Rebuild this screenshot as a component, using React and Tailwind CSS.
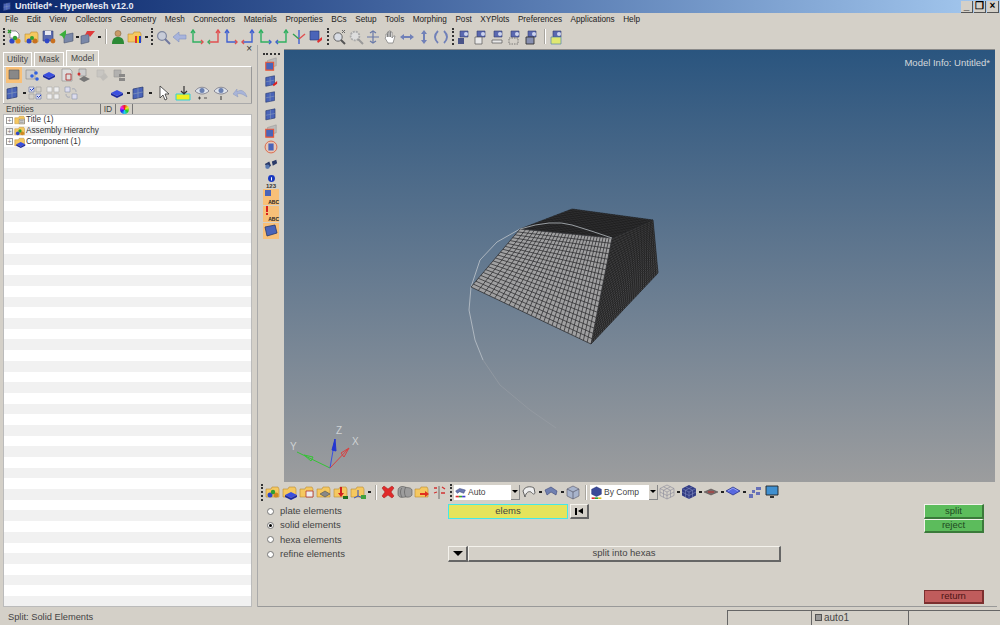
import React from 'react';

const UI = '"Liberation Sans", Arial, sans-serif';

// builds the element grid for a four cornered face, bias squeezes the cells towards one side
function quadGrid(a, b, c, d, nu, nv, bias = 1) {
    const lerp = (p, q, t) => [p[0] + (q[0] - p[0]) * t, p[1] + (q[1] - p[1]) * t];
    const fmt = (p) => `${p[0].toFixed(1)} ${p[1].toFixed(1)}`;
    let out = '';
    for (let i = 0; i <= nu; i++) {
        const t = i / nu;
        out += `M${fmt(lerp(a, b, t))}L${fmt(lerp(d, c, t))}`;
    }
    for (let j = 0; j <= nv; j++) {
        const t = Math.pow(j / nv, bias);
        out += `M${fmt(lerp(a, d, t))}L${fmt(lerp(b, c, t))}`;
    }
    return out;
}

const P = {
    fl: [471, 287], tl: [520, 229], tr: [612, 238], bt: [591, 344],
    rb: [658, 273], rt: [653, 220], bk: [572, 209],
};
const poly = (...pts) => pts.map((p) => p.join(',')).join(' ');

function Model() {
    return (
        <svg className="absolute inset-0" width="711" height="432" viewBox="284 50 711 432">
            <polyline points="520,229 497,242 480,260 471,287 469,310 475,340 483,360" fill="none" stroke="#b4bcc4" strokeWidth="0.9" />
            <polyline points="483,360 500,385 530,410 556,428" fill="none" stroke="#9aa0a6" strokeWidth="0.6" />
            <polygon points={poly(P.tl, P.bk, P.rt, P.tr)} fill="#3c3c3e" />
            <path d={quadGrid(P.tl, P.bk, P.rt, P.tr, 14, 32)} stroke="#151515" strokeWidth="0.5" fill="none" />
            <polygon points={poly(P.tr, P.rt, P.rb, P.bt)} fill="#505052" />
            <path d={quadGrid(P.tr, P.rt, P.rb, P.bt, 30, 34)} stroke="#1b1b1b" strokeWidth="0.65" fill="none" />
            <polygon points={poly(P.fl, P.tl, P.tr, P.bt)} fill="#a0a0a1" />
            <path d={quadGrid(P.fl, P.tl, P.tr, P.bt, 20, 27, 0.85)} stroke="#2b2b2d" strokeWidth="0.75" fill="none" />
            <path d="M520 229Q552 219 572 225T612 238" fill="none" stroke="#b6bcc2" strokeWidth="0.8" />
            {/* triad */}
            <path d="M330 468L297 452" stroke="#35c435" strokeWidth="1" />
            <path d="M304 455l9 2-2 4z" fill="none" stroke="#35c435" />
            <path d="M330 468L335 439" stroke="#3a50e0" strokeWidth="1" />
            <path d="M335 439l-3 11 4 1z" fill="#2436d0" stroke="#2436d0" />
            <path d="M330 468L349 448" stroke="#d84040" strokeWidth="1" />
            <path d="M349 448l-8 5 3 4z" fill="none" stroke="#d84040" />
            <text x="290" y="450" fill="#cfd2d4" fontSize="10" fontFamily={UI}>Y</text>
            <text x="336" y="434" fill="#cfd2d4" fontSize="10" fontFamily={UI}>Z</text>
            <text x="352" y="445" fill="#cfd2d4" fontSize="10" fontFamily={UI}>X</text>
        </svg>
    );
}

const FOLDER = <path d="M1 5h5l1-2h6l1 2v8H1z" fill="#f5c860" stroke="#b98a30" strokeWidth=".6" />;
const CUBE = <g><path d="M8 5l6 3-6 3-6-3z" fill="#3a4fe0" /><path d="M2 8v2l6 3 6-3V8l-6 3z" fill="#1c2aa0" /></g>;
const SHEET = <g><path d="M2 4l10-2v10L2 14z" fill="#4a64b8" stroke="#26386e" strokeWidth=".7" /><path d="M7 3v10M2 9l10-2" stroke="#9ab" strokeWidth=".5" /></g>;

const axis = (c1, c2) => <g fill="none" strokeWidth="1.4"><path d="M4 2v11h10" stroke={c1} /><path d="M2 4l2-3 2 3" stroke={c1} /><path d="M12 11l2 2-2 2" stroke={c2} /></g>;
const axisR = (c1, c2) => <g fill="none" strokeWidth="1.4"><path d="M12 2v11H2" stroke={c1} /><path d="M10 4l2-3 2 3" stroke={c1} /><path d="M4 11l-2 2 2 2" stroke={c2} /></g>;
const cam = (extra) => <g><path d="M4 2h8v6H4z" fill="#5a68b0" stroke="#333c70" strokeWidth=".6" /><circle cx="10" cy="5" r="2" fill="#cdd4ee" />{extra}</g>;

const ICONS = {
    newModel: <g><path d="M3 2h6l3 3v4H3z" fill="#fff" stroke="#667" strokeWidth=".7" /><path d="M1 1l3 3M4 1L1 4" stroke="#2a9a2a" strokeWidth="1.4" /><circle cx="5" cy="12" r="2.6" fill="#2f47c8" /><circle cx="11" cy="12" r="2.6" fill="#e09020" /><circle cx="8" cy="9" r="2.2" fill="#30a030" /></g>,
    open: <g>{FOLDER}<circle cx="5" cy="12" r="2.5" fill="#2f47c8" /><circle cx="11" cy="12" r="2.5" fill="#c87020" /><circle cx="8" cy="9" r="2" fill="#30a030" /></g>,
    save: <g><path d="M2 2h10v10H2z" fill="#5c6cae" stroke="#2e3a70" strokeWidth=".6" /><path d="M4 2h6v4H4z" fill="#e8e8f0" /><circle cx="6" cy="12" r="2.4" fill="#2f47c8" /><circle cx="12" cy="12" r="2.4" fill="#c87020" /></g>,
    importG: <g><path d="M6 6l9-2v8l-9 2z" fill="#7a88a8" stroke="#4a5570" strokeWidth=".6" /><path d="M8 1L1 6l3 1 2 3 2-5z" fill="#3bb03b" /></g>,
    exportR: <g><path d="M1 7l8-2v8l-8 2z" fill="#7a88a8" stroke="#4a5570" strokeWidth=".6" /><path d="M15 2L7 2 5 6l3-1 2 3z" fill="#e03a3a" /></g>,
    user: <g><circle cx="8" cy="4.5" r="3" fill="#c89a68" stroke="#7a5a30" strokeWidth=".5" /><path d="M2 15c0-6 3-7 6-7s6 1 6 7z" fill="#2c8a36" /></g>,
    results: <g>{FOLDER}<path d="M8 7h2v7H8z" fill="#e03030" /><path d="M10 7h2v7h-2z" fill="#e8d020" /><path d="M12 7h2v7h-2z" fill="#2040d0" /></g>,
    find: <g><circle cx="7" cy="7" r="4.4" fill="#c8ccd8" stroke="#8088a0" strokeWidth="1.2" /><path d="M10 10l5 5" stroke="#7078a0" strokeWidth="2" /></g>,
    findD: <g><circle cx="7" cy="7" r="4.4" fill="#ddd" stroke="#aaa" strokeWidth="1.8" strokeDasharray="2 1" /><path d="M10 10l5 5" stroke="#999" strokeWidth="2" /></g>,
    find2: <g><circle cx="7" cy="8" r="4.2" fill="#d8dce4" stroke="#666" strokeWidth="1" /><path d="M10 11l4 4" stroke="#555" strokeWidth="2" /><path d="M11 1l3 3M14 1l-3 3" stroke="#666" /></g>,
    back: <path d="M1 8l6-5v3h7v4H7v3z" fill="#a8b4dc" stroke="#8090c0" strokeWidth=".6" />,
    a1: axis('#30b060', '#e05050'), a2: axisR('#e05050', '#30b060'), a3: axis('#4060d0', '#e05050'), a4: axisR('#4060d0', '#e05050'),
    a5: axis('#30b060', '#4060d0'), a6: axisR('#30b060', '#4060d0'),
    a7: <g fill="none" strokeWidth="1.4"><path d="M8 1v9" stroke="#4060d0" /><path d="M8 10L2 5" stroke="#30a050" /><path d="M8 10l6-5" stroke="#e05050" /><path d="M8 10v5" stroke="#4060d0" /></g>,
    a8: <g><path d="M2 2h9v9H2z" fill="#4a64b8" stroke="#26386e" strokeWidth=".6" /><path d="M14 8l-5 4 1 2 4-3z" fill="#e03030" /></g>,
    cross: <g fill="none" stroke="#6878a8" strokeWidth="1.2"><path d="M8 2v12M2 8h12" /><path d="M5 4l3-2 3 2M5 12l3 2 3-2" /></g>,
    hand: <path d="M4 8V5h1.5v3-5H7v5-6h1.5v6-5H10v6l1.5-2H13l-2 7H6L3 9z" fill="#fff" stroke="#777" strokeWidth=".7" />,
    lr: <path d="M1 8l4-3v2h6V5l4 3-4 3V9H5v2z" fill="#7080b8" />,
    ud: <path d="M8 1l3 4H9v6h2l-3 4-3-4h2V5H5z" fill="#7080b8" />,
    rot: <path d="M5 2C1 6 1 10 5 14M11 2c4 4 4 8 0 12" fill="none" stroke="#7080b8" strokeWidth="1.8" />,
    v1: cam(<path d="M2 9h6v6H2z" fill="#4a5488" />),
    v2: cam(<path d="M2 8h7v7H2z" fill="#e8e8e8" stroke="#555" strokeWidth=".7" />),
    v3: cam(<path d="M2 11h10v3H2z" fill="#e8e8e8" stroke="#555" strokeWidth=".7" />),
    v4: cam(<path d="M2 9h9v6H2z" fill="none" stroke="#555" strokeWidth=".7" strokeDasharray="1.5 1" />),
    v5: cam(<path d="M2 8h8v7H2z" fill="#8890b0" stroke="#333" strokeWidth=".9" />),
    v6: cam(<path d="M2 8h10v7H2z" fill="#e0e870" stroke="#58a" strokeWidth=".7" />),
    solidOn: <g><rect width="16" height="16" fill="#f8c078" /><path d="M3 3h10v9H3z" fill="#888" stroke="#555" strokeWidth=".6" /></g>,
    net: <g><path d="M2 3h9v9H2z" fill="#ccc" stroke="#888" strokeWidth=".6" /><circle cx="12" cy="6" r="1.8" fill="#3060e0" /><circle cx="8" cy="9" r="1.8" fill="#3060e0" /><circle cx="13" cy="12" r="1.8" fill="#3060e0" /></g>,
    cube: CUBE,
    sys: <g><path d="M3 2h8l2 2v10H3z" fill="#ddd" stroke="#888" strokeWidth=".6" /><path d="M7 7h5v6H7z" fill="none" stroke="#b03030" strokeWidth=".9" /></g>,
    load: <g><path d="M3 2h7v7H3z" fill="#ccc" stroke="#888" strokeWidth=".6" /><path d="M3 12l5-3 6 3-6 3z" fill="#777" /><circle cx="3" cy="7" r="1.5" fill="#d03030" /></g>,
    off1: <g opacity=".45"><path d="M3 3h7v7H3z" fill="#bbb" stroke="#999" strokeWidth=".6" /><path d="M6 10l5-4 3 4-5 4z" fill="#aaa" /></g>,
    off2: <g opacity=".8"><path d="M3 3h7v7H3z" fill="#aaa" stroke="#888" strokeWidth=".6" /><path d="M8 7h6v3H8zM8 11h6v3H8z" fill="#777" /></g>,
    sheet: SHEET,
    tick1: <g><path d="M2 2h5v5H2zM9 9h5v5H9z" fill="#dde" stroke="#6070a0" strokeWidth=".6" /><path d="M9 2h5v5H9zM2 9h5v5H2z" fill="none" stroke="#999" strokeWidth=".6" /><path d="M3 4l1.5 1.5L7 3M10 11l1.5 1.5L14 10" stroke="#2040c0" fill="none" /></g>,
    tick2: <g fill="#eee" stroke="#aaa" strokeWidth=".6"><path d="M2 2h5v5H2zM9 2h5v5H9zM2 9h5v5H2zM9 9h5v5H9z" /></g>,
    tick3: <g fill="#dde" stroke="#8890a8" strokeWidth=".6"><path d="M2 2h5v5H2zM9 9h5v5H9z" /><path d="M9 4c3-1 4 1 4 3M7 12c-3 1-4-1-4-3" fill="none" /></g>,
    pointer: <path d="M4 1v12l3-3 2 5 2-1-2-5h4z" fill="#fff" stroke="#333" strokeWidth=".8" />,
    fill: <g><path d="M1 9h14v6H1z" fill="#f0f020" stroke="#30d0d8" /><path d="M9 1v8M6 6l3 3 3-3" stroke="#333" fill="none" strokeWidth="1.2" /></g>,
    eye: <g><path d="M1 6c4-5 10-5 14 0-4 4-10 4-14 0z" fill="#dfe4ec" stroke="#667" strokeWidth=".7" /><circle cx="8" cy="5.5" r="2.5" fill="#6a80b0" /><path d="M4 13h3M5.500 11.500v3M10 13h3" stroke="#333" strokeWidth=".8" /></g>,
    eye1: <g><path d="M1 6c4-5 10-5 14 0-4 4-10 4-14 0z" fill="#dfe4ec" stroke="#667" strokeWidth=".7" /><circle cx="8" cy="5.5" r="2.5" fill="#6a80b0" /><path d="M8 11v4" stroke="#333" strokeWidth="1" /></g>,
    undo: <path d="M15 12C13 5 8 4 5 7V4L1 9l5 3-1-3c3-1 6 0 10 3z" fill="#a8b4d8" stroke="#8896bc" strokeWidth=".5" />,
    folderT: <g>{FOLDER}<path d="M7 7h7v6H7z" fill="#eee" stroke="#555" strokeWidth=".6" /><path d="M8 9h5M8 11h5" stroke="#444" strokeWidth=".7" /></g>,
    folderA: <g>{FOLDER}<circle cx="5" cy="11" r="2.5" fill="#2f47c8" /><circle cx="11" cy="11" r="2.5" fill="#d08820" /><circle cx="8" cy="8" r="2.2" fill="#30a030" /></g>,
    folderC: <g>{FOLDER}<g transform="translate(1 3)">{CUBE}</g></g>,
    folderM: <g>{FOLDER}<path d="M7 7h7v6H7z" fill="#eee" stroke="#b03030" strokeWidth=".8" /></g>,
    folderS: <g>{FOLDER}<path d="M4 10l5-3 5 3-5 3z" fill="#888" stroke="#444" strokeWidth=".5" /></g>,
    folderL: <g>{FOLDER}<path d="M8 3v8" stroke="#d02020" strokeWidth="2" /><path d="M5 9l3 4 3-4z" fill="#d02020" /><path d="M10 12h5v3h-5z" fill="#207020" /></g>,
    folderX: <g>{FOLDER}<path d="M8 6v6M8 12l-4 2M8 12l5 2" stroke="#3050c0" /><path d="M11 11h5v4h-5z" fill="#40a040" /></g>,
    del: <path d="M2 4l2-2 4 3 4-3 2 2-3 4 3 4-2 2-4-3-4 3-2-2 3-4z" fill="#e02a2a" stroke="#a01818" strokeWidth=".5" />,
    mask: <g fill="#9c9c9c" stroke="#555" strokeWidth=".6"><path d="M1 7c0-5 5-5 7-4s6 0 7 3v5c-2 3-5 2-7 2-4 1-7 0-7-3z" /><path d="M5 4c-2 2-2 6 0 9M9 3c-2 3-2 7 0 10" fill="none" /></g>,
    fRed: <g>{FOLDER}<path d="M6 9h5V7l4 3-4 3v-2H6z" fill="#e03020" /></g>,
    tree: <g stroke="#555" strokeWidth=".8" fill="none"><path d="M8 2v13" /><path d="M3 4h3M11 3l3 2M3 9l3-1M10 9h4" stroke="#d03030" strokeWidth="1.3" /></g>,
    autoC: <g><path d="M2 6l5-3 7 2-2 4-5-2-3 2z" fill="#6a78b0" stroke="#3a4478" strokeWidth=".6" /><path d="M2 12h4v2H2z" fill="#e03030" /><path d="M6 12h4v2H6z" fill="#30a030" /><path d="M10 12h4v2h-4z" fill="#4040d0" /></g>,
    outline: <path d="M2 7c2-5 8-5 11-3l1 5c-1 2-2 1-4-1-2-1-5 0-6 5z" fill="#eee" stroke="#555" strokeWidth=".9" />,
    shade: <path d="M2 6l6-3 6 4-1 4-5-3-4 3z" fill="#7080b0" stroke="#3a4478" strokeWidth=".6" />,
    hexa: <g><path d="M8 2l6 3v7l-6 3-6-3V5z" fill="#a8b4cc" stroke="#556" strokeWidth=".6" /><path d="M2 5l6 3 6-3M8 8v7" fill="none" stroke="#556" strokeWidth=".7" /></g>,
    comp: <g><path d="M8 1l6 3v6l-6 3-6-3V4z" fill="#3a4a98" stroke="#1a2468" strokeWidth=".5" /><path d="M2 14h4v2H2z" fill="#e03030" /><path d="M6 14h4v2H6z" fill="#30a030" /><path d="M10 14h4v2h-4z" fill="#e0c020" /></g>,
    wire: <g fill="none" stroke="#889" strokeWidth=".6"><path d="M8 1l7 3.500v7L8 15l-7-3.500v-7z" /><path d="M1 4.500L8 8l7-3.500M8 8v7M4.500 2.800l7 3.500v7M11.500 2.800l-7 3.500v7M1 8l7 3.500L15 8" /></g>,
    meshC: <g><path d="M8 1l7 3.500v7L8 15l-7-3.500v-7z" fill="#323c84" /><path d="M1 4.500L8 8l7-3.500M8 8v7M4.500 2.800l7 3.500v7M11.500 2.800l-7 3.500v7M1 8l7 3.500L15 8" fill="none" stroke="#8c96c8" strokeWidth=".5" /></g>,
    plane: <g><path d="M1 8l7-3 7 3-7 3z" fill="#7a6a6a" stroke="#444" strokeWidth=".5" /><path d="M5 8h6" stroke="#c03030" /></g>,
    disc: <g><path d="M1 7l7-4 7 4-7 4z" fill="#5868e0" stroke="#28348c" strokeWidth=".8" /><path d="M3 7l5-3 5 3" fill="none" stroke="#c0c8ff" strokeWidth=".6" /></g>,
    dots: <g fill="#6670b8"><path d="M2 10h4v4H2zM9 3h5v3H9zM9 8h4v3H9zM5 6h3v3H5z" /></g>,
    screen: <g><path d="M2 2h12v9H2z" fill="#4090d0" stroke="#222" strokeWidth=".9" /><path d="M6 12h4v2H6z" fill="#333" /></g>,
    f1: <g><path d="M4 4l10-3v9l-10 3z" fill="#bbb" stroke="#888" strokeWidth=".5" /><path d="M2 6h9v9H2z" fill="#4a64b8" stroke="#ee5533" strokeWidth="1.200" /></g>,
    f2: <g>{SHEET}<path d="M15 8l-5 4 1 2 4-3z" fill="#e02020" /></g>,
    f3: <g>{SHEET}</g>,
    f4: <g transform="scale(1.05)">{SHEET}</g>,
    f6: <g><circle cx="8" cy="8" r="6.800" fill="#e8c8b8" stroke="#d86040" strokeWidth="1" /><path d="M5 4h6v8H5z" fill="#4a64b8" /></g>,
    binoc: <g fill="#2a3a68"><path d="M1 8l5-3 2 5-4 3zM9 5l5-2 1 4-5 3z" /><circle cx="4" cy="11" r="2.500" fill="#5878b0" /></g>,
    info: <g><circle cx="8" cy="8" r="5" fill="#1838c0" /><path d="M7.300 6h1.400v5H7.300z" fill="#fff" /></g>,
    abc1: <g><rect width="16" height="16" fill="#f8c078" /><path d="M2 1h6v6H2z" fill="#4a64b8" /></g>,
    abc2: <g><rect width="16" height="16" fill="#f8c078" /><path d="M3 0h2v6H3z" fill="#d82020" /><path d="M3 7h2v2H3z" fill="#d82020" /></g>,
    abc3: <g><rect width="16" height="16" fill="#f8c078" /><path d="M2 4l10-2 2 8-10 3z" fill="#4a64b8" stroke="#26386e" strokeWidth=".8" /></g>,
};

function Icon({ name, size = 16 }) {
    return (
        <svg width={size} height={size} viewBox="0 0 16 16" className="shrink-0 block">
            {ICONS[name]}
        </svg>
    );
}

const Caret = () => <span className="w-[3px] h-[2px] mx-[0.5px] bg-[#222] shrink-0" />;
const Divider = () => <span className="w-[2px] h-[15px] mx-[2.500px] bg-[#a8a59e] border-r border-white shrink-0" />;
const Grip = () => <span className="w-[2px] h-[17px] mx-[1.500px] shrink-0 border-l-2 border-dotted border-[#333]" />;

function Strip({ items, className = '' }) {
    return (
        <div className={`flex items-center gap-px ${className}`}>
            {items.map((it, i) => {
                if (it === '|') return <Divider key={i} />;
                if (it === ':') return <Grip key={i} />;
                if (it === 'v') return <Caret key={i} />;
                return <Icon key={i} name={it} />;
            })}
        </div>
    );
}

const MENUS = ['File', 'Edit', 'View', 'Collectors', 'Geometry', 'Mesh', 'Connectors', 'Materials', 'Properties', 'BCs', 'Setup', 'Tools', 'Morphing', 'Post', 'XYPlots', 'Preferences', 'Applications', 'Help'];

function TitleBar() {
    return (
        <div className="h-[13px] flex items-center bg-gradient-to-r from-[#0a246a] to-[#a6caf0] pl-[2px] pr-[1px]">
            <Icon name="sheet" size={11} />
            <span className="ml-[2px] text-[9px] font-bold text-[#e8ecf4]">Untitled* - HyperMesh v12.0</span>
            <div className="ml-auto flex gap-px">
                {['_', '❐', '×'].map((c) => (
                    <span key={c} className="w-[12px] h-[12px] bg-[#d4d0c8] border-b border-r border-[#555] flex items-center justify-center text-[10px] leading-none font-bold text-black">{c}</span>
                ))}
            </div>
        </div>
    );
}

function Combo({ icon, label, w }) {
    return (
        <div className={`flex items-center h-[15px] shrink-0 ${w}`}>
            <div className="flex-1 h-full bg-white flex items-center gap-px overflow-hidden">
                <Icon name={icon} size={13} />
                <span className="text-[8.500px] text-[#444]">{label}</span>
            </div>
            <span className="w-[9px] h-full flex items-center justify-center bg-[#d4d0c8] border-r border-b border-[#888]">
                <span className="border-x-[3px] border-t-[3px] border-x-transparent border-t-black" />
            </span>
        </div>
    );
}

function LeftPanel() {
    const stripes = Array.from({ length: 46 });
    const tree = [
        ['folderT', 'Title (1)'],
        ['folderA', 'Assembly Hierarchy'],
        ['folderC', 'Component (1)'],
    ];
    return (
        <aside className="relative w-[253px] shrink-0 flex flex-col pt-[5px] pl-[3px] pr-px">
            <span className="absolute right-[1px] top-[-1px] text-[10px] leading-none text-[#333]">×</span>
            <div className="h-[16px] flex items-end gap-[2px] text-[8.500px] text-[#444]">
                <span className="w-[29px] h-[14px] border border-b-0 border-[#fff] bg-[#d0ccc4] flex items-center justify-center">Utility</span>
                <span className="w-[30px] h-[14px] border border-b-0 border-[#fff] bg-[#d0ccc4] flex items-center justify-center">Mask</span>
                <span className="w-[33px] h-[16px] border border-b-0 border-[#fff] bg-[#d8d5cd] flex items-center justify-center">Model</span>
            </div>
            <div className="h-[37px] border-t border-l border-white border-r border-r-[#999] flex flex-col">
                <Strip className="h-[17px] pl-[2px] !gap-[1.500px]" items={['solidOn', 'net', 'cube', 'sys', 'load', 'off1', 'off2']} />
                <div className="h-[20px] flex items-center pl-[1px]">
                    <Strip items={['sheet', 'v']} />
                    <Strip className="ml-px !gap-[2px]" items={['tick1', 'tick2', 'tick3']} />
                    <Strip className="ml-[30px]" items={['cube', 'v', 'sheet', 'v']} />
                    <Strip className="ml-[4px] !gap-[3px]" items={['pointer', 'fill', 'eye', 'eye1', 'undo']} />
                </div>
            </div>
            <div className="h-[11px] flex items-center text-[8.500px] text-[#444] bg-[#d4d0c8] border-t border-[#aaa]">
                <span className="w-[98px] pl-[3px] border-r border-[#777] h-full flex items-center">Entities</span>
                <span className="w-[15px] border-r border-[#777] h-full flex items-center justify-center">ID</span>
                <span className="w-[17px] border-r border-[#777] h-full flex items-center justify-center">
                    <span className="w-[9px] h-[9px] rounded-full bg-[conic-gradient(#e22,#ee2,#2c2,#2ce,#22e,#e2e,#e22)]" />
                </span>
            </div>
            <div className="flex-1 overflow-hidden border border-[#bbb] bg-white">
                {stripes.map((_, i) => (
                    <div key={i} className={`h-[10.700px] flex items-center text-[8.200px] text-[#333] ${i % 2 ? 'bg-[#f1f1f1]' : 'bg-white'}`}>
                        {tree[i] && (
                            <>
                                <span className="ml-[2px] w-[7px] h-[7px] border border-[#999] flex items-center justify-center text-[7px] leading-none text-[#777]">+</span>
                                <span className="ml-[1px]"><Icon name={tree[i][0]} size={12} /></span>
                                <span>{tree[i][1]}</span>
                            </>
                        )}
                    </div>
                ))}
            </div>
        </aside>
    );
}

function SideTools() {
    const names = ['f1', 'f2', 'f3', 'f4', 'f1', 'f6', 'binoc'];
    const abc = ['abc1', 'abc2', 'abc3'];
    return (
        <div className="w-[26px] shrink-0 flex flex-col items-center pt-[4px]">
            <span className="w-[17px] h-[2px] border-t-2 border-dotted border-[#333]" />
            <div className="mt-[2px] flex flex-col gap-[2.700px]">
                {names.map((n, i) => <Icon key={i} name={n} size={14} />)}
            </div>
            <div className="h-[17px] pt-[2px] flex flex-col items-center">
                <Icon name="info" size={11} />
                <span className="text-[6px] leading-[5px] font-bold text-[#333]">123</span>
            </div>
            <div className="mt-[1px] flex flex-col gap-px">
                {abc.map((n, i) => (
                    <span key={n} className="relative block w-[16px] h-[16px]">
                        <Icon name={n} />
                        {i < 2 && <span className="absolute right-0 bottom-0 text-[5px] leading-[6px] font-bold text-[#222]">ABC</span>}
                    </span>
                ))}
            </div>
        </div>
    );
}

function Raised({ className = '', children }) {
    return (
        <button type="button" className={`flex items-center justify-center border border-t-[#f4f2ec] border-l-[#f4f2ec] border-b-2 border-r-2 border-b-[#666] border-r-[#666] text-[9.500px] ${className}`}>
            {children}
        </button>
    );
}

function SplitPanel() {
    const opts = ['plate elements', 'solid elements', 'hexa elements', 'refine elements'];
    return (
        <div className="flex-1 flex border-b border-[#999] mr-[3px] pt-[2px] pb-[2px]">
            <div className="w-[190px] pl-[9px] flex flex-col">
                {opts.map((o, i) => (
                    <label key={o} className="h-[14.400px] flex items-center gap-[6px] text-[9.500px] text-[#444]">
                        <span className="w-[7px] h-[7px] rounded-full bg-white border border-[#777] flex items-center justify-center">
                            {i === 1 && <span className="w-[3px] h-[3px] rounded-full bg-black" />}
                        </span>
                        {o}
                    </label>
                ))}
            </div>
            <div className="w-[476px] flex flex-col">
                <div className="flex gap-[2px] h-[15px]">
                    <span className="w-[120px] bg-[#e6e45a] border-[1.500px] border-[#44e8e8] flex items-center justify-center text-[9.500px] text-[#444]">elems</span>
                    <Raised className="w-[19px] gap-px">
                        <span className="w-[2px] h-[7px] bg-black" />
                        <span className="border-y-[3.500px] border-r-[5px] border-y-transparent border-r-black" />
                    </Raised>
                </div>
                <div className="flex mt-[27px] h-[16px] w-[333px]">
                    <Raised className="w-[20px]">
                        <span className="border-x-[5px] border-t-[5px] border-x-transparent border-t-black" />
                    </Raised>
                    <Raised className="flex-1 text-[#444]">split into hexas</Raised>
                </div>
            </div>
            <div className="ml-auto mr-[13px] w-[60px] flex flex-col">
                <Raised className="h-[15px] bg-[#5cbc5c] !border-b-[#3a7a3a] !border-r-[#3a7a3a] text-[#1f4a1f]">split</Raised>
                <Raised className="h-[14px] bg-[#5cbc5c] !border-b-[#3a7a3a] !border-r-[#3a7a3a] text-[#1f4a1f]">reject</Raised>
                <Raised className="mt-auto h-[14px] bg-[#c05c5c] !border-[#7c2f2f] text-[#4a1414]">return</Raised>
            </div>
        </div>
    );
}

function StatusBar() {
    return (
        <div className="h-[18px] flex text-[9.300px] text-[#444]">
            <div className="w-[727px] pl-[8px] pt-[3px] flex items-center">Split: Solid Elements</div>
            <div className="w-[84px] mt-[3px] border-l border-t border-[#666]" />
            <div className="w-[97px] mt-[3px] pb-[2px] border-l border-t border-[#666] flex items-center pl-[3px] gap-[2px] text-[10px]">
                <span className="w-[7px] h-[7px] bg-[#999] border border-[#555]" />
                auto1
            </div>
            <div className="flex-1 mt-[3px] border-l border-t border-[#666]" />
        </div>
    );
}

export default function App() {
    return (
        <div className="w-[1000px] h-[625px] overflow-hidden flex flex-col bg-[#d4d0c8]" style={{ fontFamily: UI }}>
            <TitleBar />
            <nav className="h-[15px] flex items-center gap-[8.500px] pl-[5px] text-[8.200px] text-[#222] bg-[#d4d0c8]">
                {MENUS.map((m) => <span key={m}>{m}</span>)}
            </nav>
            <div className="h-[17px] flex items-center pl-px">
                <Strip items={[':', 'newModel', 'open', 'save', 'importG', 'v', 'exportR', 'v', '|', 'user', 'results', 'v', ':', 'find', 'back', 'a1', 'a2', 'a3', 'a4', 'a5', 'a6', 'a7', 'a8', ':', 'find2', 'findD', 'cross', 'hand', 'lr', 'ud', 'rot', ':', 'v1', 'v2', 'v3', 'v4', 'v5', '|', 'v6']} />
            </div>
            <div className="flex-1 flex min-h-0">
                <LeftPanel />
                <div className="w-[4px] shrink-0" />
                <div className="flex-1 flex flex-col min-w-0 pt-[4px] border-l border-[#aaa]">
                    <div className="h-[433px] flex">
                        <SideTools />
                        <main className="relative w-[711px] border-t border-[#8a8a8a] bg-gradient-to-b from-[#2a557f] to-[#9c9d9e] overflow-hidden">
                            <Model />
                            <span className="absolute right-[5px] top-[6px] text-[9.500px] text-[#d4d8dc]">Model Info: Untitled*</span>
                        </main>
                    </div>
                    <div className="h-[20px] flex items-center pl-px">
                        <Strip items={[':', 'folderA', 'folderC', 'folderM', 'folderS', 'folderL', 'folderX', 'v', '|', 'del', 'mask', 'fRed', 'tree', ':']} />
                        <Combo icon="autoC" label="Auto" w="w-[66px] ml-px" />
                        <Strip className="ml-[1px]" items={['outline', 'v', 'shade', 'v', 'hexa', '|']} />
                        <Combo icon="comp" label="By Comp" w="w-[68px] ml-px" />
                        <Strip className="ml-[1px]" items={['wire', 'v', 'meshC', 'v', 'plane', 'v', 'disc', 'v', 'dots', 'screen']} />
                    </div>
                    <SplitPanel />
                </div>
            </div>
            <StatusBar />
        </div>
    );
}
